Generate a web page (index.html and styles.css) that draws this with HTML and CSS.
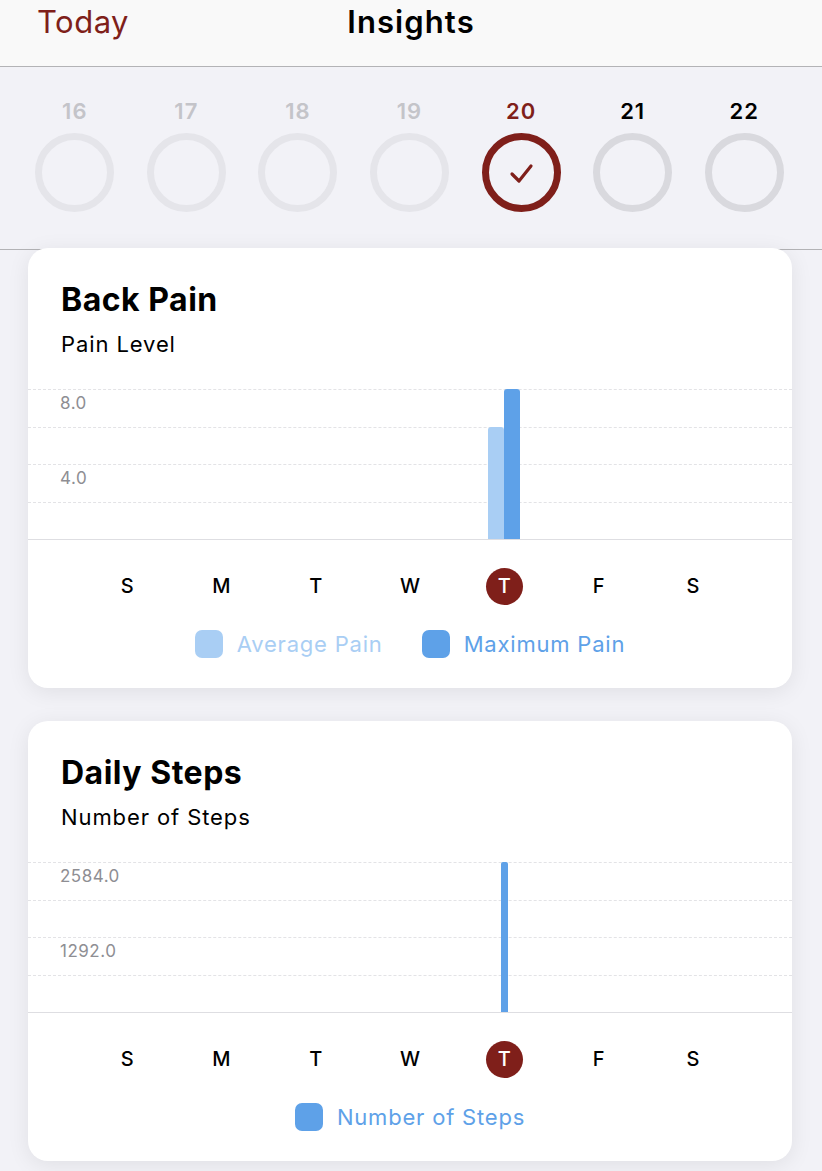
FILE: index.html
```html
<!DOCTYPE html>
<html>
<head>
<meta charset="utf-8">
<link rel="stylesheet" href="styles.css">
</head>
<body>
<header class="navbar">
  <span class="nav-left">Today</span>
  <span class="nav-title">Insights</span>
</header>
<section class="week">
  <div class="day past"><span class="num">16</span><span class="ring"></span></div>
  <div class="day past"><span class="num">17</span><span class="ring"></span></div>
  <div class="day past"><span class="num">18</span><span class="ring"></span></div>
  <div class="day past"><span class="num">19</span><span class="ring"></span></div>
  <div class="day today"><span class="num">20</span><span class="ring">
    <svg width="26" height="22" viewBox="0 0 26 22"><path d="M3 11 L10 18 L22 3" fill="none" stroke="#7f1f1a" stroke-width="3.2" stroke-linecap="round" stroke-linejoin="round"/></svg>
  </span></div>
  <div class="day future"><span class="num">21</span><span class="ring"></span></div>
  <div class="day future"><span class="num">22</span><span class="ring"></span></div>
</section>
<main class="feed">
  <article class="card">
    <h2 class="card-title">Back Pain</h2>
    <p class="card-sub">Pain Level</p>
    <div class="chart">
      <div class="grid">
        <div class="gl"><span class="ylab">8.0</span></div>
        <div class="gl"></div>
        <div class="gl"><span class="ylab">4.0</span></div>
        <div class="gl"></div>
      </div>
      <div class="plot">
        <div class="col"></div><div class="col"></div><div class="col"></div><div class="col"></div>
        <div class="col"><div class="bar light" style="height:75%"></div><div class="bar dark" style="height:100%"></div></div>
        <div class="col"></div><div class="col"></div>
      </div>
    </div>
    <div class="days">
      <span>S</span><span>M</span><span>T</span><span>W</span><span class="sel">T</span><span>F</span><span>S</span>
    </div>
    <div class="legend">
      <span class="item light-t"><i class="sw light"></i>Average Pain</span>
      <span class="item dark-t"><i class="sw dark"></i>Maximum Pain</span>
    </div>
  </article>
  <article class="card">
    <h2 class="card-title">Daily Steps</h2>
    <p class="card-sub">Number of Steps</p>
    <div class="chart">
      <div class="grid">
        <div class="gl"><span class="ylab">2584.0</span></div>
        <div class="gl"></div>
        <div class="gl"><span class="ylab">1292.0</span></div>
        <div class="gl"></div>
      </div>
      <div class="plot">
        <div class="col"></div><div class="col"></div><div class="col"></div><div class="col"></div>
        <div class="col"><div class="bar thin" style="height:100%"></div></div>
        <div class="col"></div><div class="col"></div>
      </div>
    </div>
    <div class="days">
      <span>S</span><span>M</span><span>T</span><span>W</span><span class="sel">T</span><span>F</span><span>S</span>
    </div>
    <div class="legend">
      <span class="item dark-t"><i class="sw dark"></i>Number of Steps</span>
    </div>
  </article>
</main>
</body>
</html>
```
FILE: styles.css
```css
* { box-sizing: border-box; }
html, body { margin: 0; padding: 0; }
body {
  width: 822px;
  height: 1171px;
  overflow: hidden;
  background: #f2f2f7;
  font-family: Inter, "Noto Sans", sans-serif;
  color: #000;
}
.navbar {
  height: 67px;
  background: #f9f9f9;
  border-bottom: 1px solid #b3b3b6;
  display: flex;
  align-items: flex-start;
  justify-content: center;
  position: relative;
  padding-top: 3px;
}
.nav-left {
  position: absolute;
  left: 37px;
  top: 3px;
  font-size: 31px;
  color: #7f1f1a;
  letter-spacing: 0.5px;
}
.nav-title {
  font-size: 31px;
  font-weight: 600;
  letter-spacing: 1.1px;
}
.week {
  height: 183px;
  background: #f2f2f7;
  border-bottom: 1px solid #b3b3b6;
  display: grid;
  grid-template-columns: repeat(7, 1fr);
  padding: 0 22px 0 19px;
  align-items: start;
}
.day {
  display: flex;
  flex-direction: column;
  align-items: center;
  padding-top: 30px;
}
.num {
  font-size: 22px;
  font-weight: 600;
  line-height: 28px;
  height: 28px;
  letter-spacing: 1px;
}
.ring {
  margin-top: 8px;
  width: 79px;
  height: 79px;
  border-radius: 50%;
  border: 7px solid #e5e5ea;
  display: flex;
  align-items: center;
  justify-content: center;
}
.past .num { color: #c4c4c9; }
.past .ring { border-color: #e5e5ea; }
.future .num { color: #000; }
.future .ring { border-color: #d9d9de; }
.today .num { color: #7f1f1a; }
.today .ring { border-color: #7f1f1a; border-width: 7px; }
.today svg { margin-top: 3px; margin-left: 2px; }

.feed {
  padding: 0 30px 0 28px;
  display: flex;
  flex-direction: column;
  gap: 33px;
}
.card {
  background: #fff;
  border-radius: 20px;
  height: 440px;
  margin-top: -2px;
  box-shadow: 0 4px 22px rgba(0, 0, 0, 0.08);
  display: flex;
  flex-direction: column;
}
.card + .card { margin-top: 0; }
.card-title {
  margin: 0;
  padding: 33px 33px 0;
  font-size: 32px;
  font-weight: 700;
  line-height: 38px;
  letter-spacing: 0.5px;
}
.card-sub {
  margin: 11px 0 0;
  padding: 0 33px;
  font-size: 22px;
  line-height: 28px;
  letter-spacing: 0.9px;
}
.chart {
  margin-top: 31px;
  height: 151px;
  position: relative;
  border-bottom: 1.5px solid #dedee2;
}
.grid {
  position: absolute;
  inset: 0 0 0 0;
  display: flex;
  flex-direction: column;
}
.gl {
  height: 37.5px;
  border-top: 1.5px dashed #e3e3e6;
  padding-left: 32px;
}
.ylab {
  display: block;
  font-size: 17px;
  color: #8e8e93;
  line-height: 20px;
  margin-top: 3px;
  letter-spacing: 0.5px;
}
.plot {
  position: absolute;
  left: 52px;
  right: 52px;
  top: 0;
  bottom: 0;
  display: grid;
  grid-template-columns: repeat(7, 1fr);
}
.col {
  display: flex;
  justify-content: center;
  align-items: flex-end;
}
.bar { width: 16px; border-radius: 3px 3px 0 0; }
.bar.thin { width: 7px; border-radius: 2px 2px 0 0; }
.light { background: #a9cef4; }
.dark { background: #5ea1e8; }
.thin { background: #5ea1e8; }
.days {
  margin: 28px 52px 0;
  display: grid;
  grid-template-columns: repeat(7, 1fr);
  justify-items: center;
}
.days span {
  width: 37px;
  height: 37px;
  line-height: 37px;
  text-align: center;
  font-size: 20px;
  font-weight: 500;
}
.days .sel {
  background: #7f1f1a;
  color: #fff;
  border-radius: 50%;
}
.legend {
  margin-top: 25px;
  display: flex;
  justify-content: center;
  gap: 39px;
}
.item {
  display: flex;
  align-items: center;
  font-size: 22px;
  line-height: 28px;
  letter-spacing: 0.8px;
}
.sw {
  display: inline-block;
  width: 28px;
  height: 28px;
  border-radius: 7px;
  margin-right: 14px;
}
.light-t { color: #a9cef4; }
.dark-t { color: #5ea1e8; }
```
